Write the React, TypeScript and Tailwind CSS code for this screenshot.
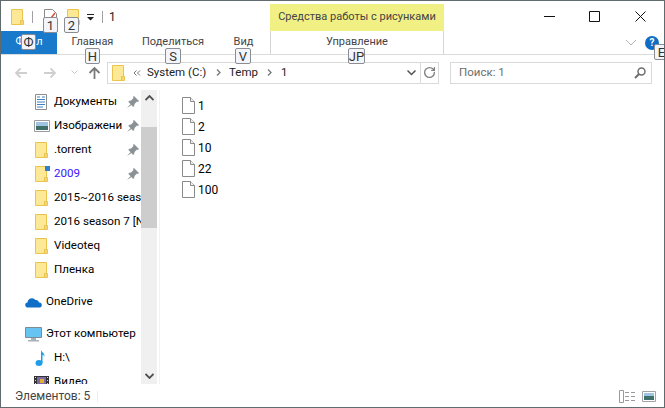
import type React from "react"
import { RotateCw } from "lucide-react"

const FolderIcon = ({ className = "" }: { className?: string }) => (
  <svg width="13" height="16" viewBox="0 0 13 16" className={`shrink-0 ${className}`}>
    <path d="M.5.5h11v15H.5z" fill="#fde995" stroke="#eac44e" />
    <path d="M9.5 11.5h3v4h-3z" fill="#f7d774" stroke="#eac44e" />
  </svg>
)

const FileIcon = () => (
  <svg width="13" height="17" viewBox="0 0 13 17" className="shrink-0">
    <path d="M.5.5h8l4 4v12H.5z" fill="#fff" stroke="#8a8a8a" />
    <path d="M8.5.5v4h4" fill="#f1f1f1" stroke="#8a8a8a" />
  </svg>
)

const PinIcon = () => (
  <svg width="12" height="12" viewBox="0 0 12 12" className="shrink-0">
    <path d="M7 0l5 5-1 1-1-.5L7.500 8l-.5 2.500-1 .2L1.500 6l.3-1L4 4.500 6.500 2 6 1z" fill="#8b9296" />
    <path d="M3.500 8L0 12l4.500-3z" fill="#8b9296" />
  </svg>
)

const Keytip = ({ children, className }: { children: React.ReactNode; className: string }) => (
  <div
    className={`absolute flex h-[16px] items-center justify-center rounded-[2px] border border-[#8a8d93] bg-[#f3f5fa] text-[13px] leading-none text-[#333] ${className}`}
  >
    {children}
  </div>
)

const Chevron = ({ className }: { className: string }) => (
  <svg width="5" height="7" viewBox="0 0 5 7" className={className}>
    <path d="M1 .500l3 3-3 3" fill="none" stroke="#777" strokeWidth="1.300" />
  </svg>
)

const NavItem = ({
  icon,
  label,
  pin,
  color = "text-black",
  h = "h-[24px]",
  pl = "pl-[34px]",
  gap = "w-[19px]",
}: {
  icon: React.ReactNode
  label: string
  pin?: boolean
  color?: string
  h?: string
  pl?: string
  gap?: string
}) => (
  <div className={`relative flex shrink-0 items-center overflow-hidden whitespace-nowrap ${h} ${pl}`}>
    <div className={`flex shrink-0 items-center ${gap}`}>{icon}</div>
    <span className={`text-[11.6px] ${color}`}>{label}</span>
    {pin && (
      <div className="absolute right-[2px] top-[6px] bg-white pl-[3px]">
        <PinIcon />
      </div>
    )}
  </div>
)

export default function App() {
  const files = ["1", "2", "10", "22", "100"]

  return (
    <div
      className="relative flex h-[408px] w-[665px] flex-col overflow-hidden border border-[#5f6b6d] bg-white text-[12px] text-black"
      style={{ fontFamily: 'Roboto, "Noto Sans", sans-serif' }}
    >
      {/* заголовок */}
      <div className="flex h-[30px] shrink-0">
        <div className="flex w-[269px] items-center pl-[10px] pt-[2px]">
          <FolderIcon />
          <div className="ml-[8px] h-[12px] w-px bg-[#a0a0a0]" />
          <svg width="13" height="16" viewBox="0 0 13 16" className="ml-[11px]">
            <path d="M.5.5h8l4 4v11H.5z" fill="#fff" stroke="#8a8a8a" />
            <path d="M7 9l4-5" stroke="#d9502e" strokeWidth="1.500" />
          </svg>
          <FolderIcon className="ml-[10px]" />
          <svg width="8" height="7" viewBox="0 0 8 7" className="ml-[7px]">
            <path d="M0 0h7v1H0zM0 3h7L3.500 6.500z" fill="#222" />
          </svg>
          <div className="ml-[7px] h-[12px] w-px bg-[#a0a0a0]" />
          <span className="ml-[6px] text-[12px] text-[#222]">1</span>
        </div>
        <div className="mt-[3px] flex w-[174px] items-center justify-center whitespace-nowrap bg-[#f1f085] text-[11px] text-[#444]">
          Средства работы с рисунками
        </div>
        <div className="flex flex-1 items-center justify-end">
          <svg width="11" height="11" viewBox="0 0 11 11" className="mr-[34px]">
            <path d="M0 5.500h11" stroke="#111" />
          </svg>
          <svg width="11" height="11" viewBox="0 0 11 11" className="mr-[35px]">
            <path d="M.5.500h10v10H.5z" fill="none" stroke="#111" />
          </svg>
          <svg width="11" height="11" viewBox="0 0 11 11" className="mr-[18px]">
            <path d="M.5.500l10 10M10.500.500l-10 10" stroke="#111" />
          </svg>
        </div>
      </div>

      {/* вкладки */}
      <div className="flex h-[24px] shrink-0 items-center border-b border-[#dadbdc] text-[11px] text-[#444]">
        <div className="flex h-full w-[56px] items-center justify-center bg-[#1979ca] text-white">Файл</div>
        <div className="flex w-[71px] justify-center">Главная</div>
        <div className="flex w-[90px] justify-center">Поделиться</div>
        <div className="flex w-[51px] justify-center">Вид</div>
        <div className="ml-[1px] flex h-full w-[174px] items-center justify-center border-x border-[#d5d5d5]">
          Управление
        </div>
        <svg width="12" height="7" viewBox="0 0 12 7" className="ml-[181px]">
          <path d="M1 1l5 5 5-5" fill="none" stroke="#b4b4b4" />
        </svg>
        <div className="ml-[8px] flex h-[14px] w-[14px] items-center justify-center rounded-full bg-[#0f6cc4] text-[10px] font-bold text-white">
          ?
        </div>
      </div>

      {/* адресная строка */}
      <div className="flex h-[35px] shrink-0 items-center">
        <svg width="13" height="12" viewBox="0 0 13 12" className="ml-[13px]">
          <path d="M13 6H2M6.500 1.500L2 6l4.500 4.500" fill="none" stroke="#cfcfcf" strokeWidth="1.800" />
        </svg>
        <svg width="13" height="12" viewBox="0 0 13 12" className="ml-[17px]">
          <path d="M0 6h11M6.500 1.500L11 6l-4.500 4.500" fill="none" stroke="#cfcfcf" strokeWidth="1.800" />
        </svg>
        <svg width="7" height="5" viewBox="0 0 7 5" className="ml-[14px]">
          <path d="M.5.500l3 3 3-3" fill="none" stroke="#c8c8c8" />
        </svg>
        <svg width="13" height="13" viewBox="0 0 13 13" className="ml-[10px]">
          <path d="M6.500 13V2M1.500 7l5-5 5 5" fill="none" stroke="#7a7a7a" strokeWidth="1.800" />
        </svg>
        <div className="ml-[6px] flex h-[22px] w-[332px] items-center border border-[#d9d9d9] pl-[4px] text-[11.5px] text-[#222]">
          <FolderIcon />
          <svg width="8" height="6" viewBox="0 0 8 6" className="ml-[8px]">
            <path d="M3.500.500L1 3l2.500 2.500M7 .500L4.500 3 7 5.500" fill="none" stroke="#777" />
          </svg>
          <span className="ml-[6px] w-[60px] whitespace-nowrap">System (C:)</span>
          <Chevron className="ml-[9px]" />
          <span className="ml-[8px] w-[31px]">Temp</span>
          <Chevron className="ml-[7px]" />
          <span className="ml-[9px]">1</span>
          <svg width="9" height="6" viewBox="0 0 9 6" className="ml-auto mr-[4px]">
            <path d="M.5.500l4 4 4-4" fill="none" stroke="#555" strokeWidth="1.500" />
          </svg>
          <div className="flex h-full w-[18px] items-center justify-center border-l border-[#d9d9d9]">
            <RotateCw size={13} strokeWidth={2.5} className="text-[#808080]" />
          </div>
        </div>
        <div className="ml-[11px] flex h-[22px] w-[202px] items-center justify-between border border-[#d9d9d9] pl-[8px] pr-[5px] text-[11.5px] text-[#6d6d6d]">
          <span>Поиск: 1</span>
          <svg width="12" height="12" viewBox="0 0 12 12">
            <circle cx="7.500" cy="4.500" r="3.500" fill="none" stroke="#6d6d6d" strokeWidth="1.500" />
            <path d="M5 7l-4 4" stroke="#6d6d6d" strokeWidth="2" />
          </svg>
        </div>
      </div>

      {/* основная область */}
      <div className="flex min-h-0 flex-1">
        <div className="flex w-[140px] shrink-0 flex-col overflow-hidden">
          <NavItem
            label="Документы"
            pin
            icon={
              <svg width="12" height="16" viewBox="0 0 12 16">
                <path d="M.5.500h11v15H.5z" fill="#fff" stroke="#8d8d8d" />
                <path d="M2 3h3M7 3h3M2 5.500h8M2 8h8M2 10.500h8M2 13h6" stroke="#3e82c4" />
              </svg>
            }
          />
          <NavItem
            label="Изображени"
            pin
            icon={
              <svg width="16" height="12" viewBox="0 0 16 12" className="-ml-[1px]">
                <path d="M.5.500h15v11H.5z" fill="#fff" stroke="#9c9c9c" />
                <path d="M2 2h12v4H2z" fill="#9ec4e0" />
                <path d="M2 6h12v4H2z" fill="#3f6f6a" />
              </svg>
            }
          />
          <NavItem label=".torrent" pin icon={<FolderIcon />} />
          <NavItem
            label="2009"
            pin
            color="text-[#3c14ff]"
            icon={
              <div className="relative">
                <FolderIcon />
                <div className="absolute right-[-2px] top-0 h-[5px] w-[5px] bg-[#2f7fd0]" />
              </div>
            }
          />
          <NavItem label="2015~2016 season" icon={<FolderIcon />} />
          <NavItem label="2016 season 7 [NF]" icon={<FolderIcon />} />
          <NavItem label="Videoteq" icon={<FolderIcon />} />
          <NavItem label="Пленка" icon={<FolderIcon />} />
          <NavItem
            label="OneDrive"
            h="h-[24px] mt-[8px]"
            pl="pl-[24px]"
            gap="w-[21px]"
            icon={
              <svg width="17" height="11" viewBox="0 0 17 11">
                <path d="M3 10.500a2.500 2.500 0 0 1-.500-5A4.500 4.500 0 0 1 10.500 3a3 3 0 0 1 3.500 2.500 2.500 2.500 0 0 1 .500 5z" fill="#0f6fc6" />
              </svg>
            }
          />
          <NavItem
            label="Этот компьютер"
            h="h-[24px] mt-[8px]"
            pl="pl-[24px]"
            gap="w-[21px]"
            icon={
              <svg width="17" height="15" viewBox="0 0 17 15">
                <path d="M.5.500h16v10H.5z" fill="#67c3f2" stroke="#7d8c94" />
                <path d="M6 11h5v2H6zM3 13h11v1.500H3z" fill="#a8b2b8" />
              </svg>
            }
          />
          <NavItem
            label="H:\"
            icon={
              <svg width="10" height="16" viewBox="0 0 10 16">
                <ellipse cx="4" cy="13" rx="3.500" ry="3" fill="#1e9ee8" />
                <path d="M6 13V0c1 3 4 3 3.500 7C9 5 8 5 7.500 5v8z" fill="#1e9ee8" />
              </svg>
            }
          />
          <NavItem
            label="Видео"
            pl="pl-[33px]"
            gap="w-[20px]"
            icon={
              <svg width="15" height="12" viewBox="0 0 15 12">
                <path d="M0 0h15v12H0z" fill="#333" />
                <path d="M1 1h1v1H1zM13 1h1v1h-1zM1 4h1v1H1zM13 4h1v1h-1zM1 7h1v1H1zM13 7h1v1h-1z" fill="#ddd" />
                <path d="M3 1h9v9H3z" fill="#7f6aa8" />
                <path d="M6 3h4v4H6z" fill="#e0b030" />
              </svg>
            }
          />
        </div>

        {/* полоса прокрутки */}
        <div className="flex w-[16px] shrink-0 flex-col bg-[#f0f0f0]">
          <div className="flex h-[37px] shrink-0 justify-center pt-[5px]">
            <svg width="9" height="6" viewBox="0 0 9 6">
              <path d="M.5 5l4-4 4 4" fill="none" stroke="#505050" strokeWidth="1.800" />
            </svg>
          </div>
          <div className="h-[101px] shrink-0 bg-[#cdcdcd]" />
          <div className="mt-auto flex h-[17px] shrink-0 justify-center pb-[5px] pt-[6px]">
            <svg width="9" height="6" viewBox="0 0 9 6">
              <path d="M.5 1l4 4 4-4" fill="none" stroke="#505050" strokeWidth="1.800" />
            </svg>
          </div>
        </div>

        <div className="ml-[2px] flex flex-1 flex-col border-l border-[#f2f2f2] pl-[22px] pt-[5px]">
          {files.map((name) => (
            <div key={name} className="flex h-[21px] items-center gap-[3px] text-[12px]">
              <FileIcon />
              <span>{name}</span>
            </div>
          ))}
        </div>
      </div>

      {/* строка состояния */}
      <div className="flex h-[23px] shrink-0 items-center pl-[14px] pr-[8px] pt-[1px] text-[#444]">
        <span className="w-[72px] whitespace-nowrap">Элементов: 5</span>
        <div className="ml-[10px] h-[11px] w-px bg-[#ededed]" />
        <svg width="17" height="13" viewBox="0 0 17 13" className="ml-auto">
          <path d="M.5.500h4v12h-4z" fill="#fff" stroke="#9a9a9a" />
          <path d="M6 2.500h4M12 2.500h4M6 6.500h4M12 6.500h4M6 10.500h4M12 10.500h4" stroke="#9a9a9a" />
        </svg>
        <svg width="14" height="11" viewBox="0 0 14 11" className="ml-[6px]">
          <path d="M.5.500h13v10H.5z" fill="#fff" stroke="#a3a3a3" />
          <path d="M2 2h10v3H2z" fill="#9ec4e0" />
          <path d="M2 5h10v4H2z" fill="#3f6f6a" />
        </svg>
      </div>

      {/* подсказки клавиш */}
      <Keytip className="left-[42px] top-[16px] w-[15px]">1</Keytip>
      <Keytip className="left-[63px] top-[16px] w-[15px]">2</Keytip>
      <Keytip className="left-[20px] top-[33px] w-[15px]">Ф</Keytip>
      <Keytip className="left-[84px] top-[47px] w-[15px]">H</Keytip>
      <Keytip className="left-[164px] top-[47px] w-[16px]">S</Keytip>
      <Keytip className="left-[234px] top-[47px] w-[16px]">V</Keytip>
      <Keytip className="left-[347px] top-[47px] w-[17px]">JP</Keytip>
      <Keytip className="left-[653px] top-[43px] w-[15px]">E</Keytip>
    </div>
  )
}
